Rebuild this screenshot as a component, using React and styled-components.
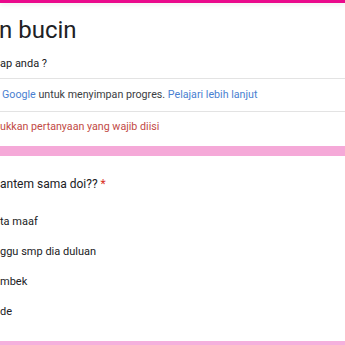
import React from "react"
import styled, { createGlobalStyle } from "styled-components"

const GlobalStyle = createGlobalStyle`
    html, body {
        margin: 0;
        padding: 0;
        background: #ffffff;
    }
    body {
        font-family: Roboto, "Noto Sans", "Liberation Sans", sans-serif;
        color: #202124;
    }
`

const options = ["ta maaf", "ggu smp dia duluan", "mbek", "de"]

function App() {
    return (
        <Page>
            <GlobalStyle />
            <TopBar />
            <HeaderCard>
                <Title>n bucin</Title>
                <Desc>ap anda ?</Desc>
                <Divider gap={6} />
                <InfoRow>
                    <Link>Google</Link> untuk menyimpan progres.{" "}
                    <Link>Pelajari lebih lanjut</Link>
                </InfoRow>
                <Divider />
                <Required>ukkan pertanyaan yang wajib diisi</Required>
            </HeaderCard>
            <QuestionCard>
                <Question>
                    antem sama doi?? <Star>*</Star>
                </Question>
                <OptionList>
                    {options.map((o) => (
                        <Option key={o}>{o}</Option>
                    ))}
                </OptionList>
            </QuestionCard>
            <NextCard />
        </Page>
    )
}

export default App

const Page = styled.div`
    width: 345px;
    height: 345px;
    overflow: hidden;
    display: flex;
    flex-direction: column;
    background: #ffffff;
`

const TopBar = styled.div`
    height: 3px;
    flex-shrink: 0;
    background: #ea0a8c;
    box-shadow: 0 2px 4px rgba(0, 0, 0, 0.08);
`

const HeaderCard = styled.div`
    display: flex;
    flex-direction: column;
    padding-top: 11px;
    flex-shrink: 0;
`

const Title = styled.div`
    font-size: 24px;
    line-height: 32px;
    height: 32px;
    color: #202124;
    margin-left: -1px;
`

const Desc = styled.div`
    font-size: 11px;
    line-height: 16px;
    margin-top: 10px;
    color: #202124;
`

const Divider = styled.div`
    height: 1px;
    flex-shrink: 0;
    background: #e3e3e3;
    margin-top: ${(p) => p.gap || 0}px;
`

const InfoRow = styled.div`
    font-size: 10.7px;
    line-height: 32px;
    height: 32px;
    color: #3c4043;
    padding-left: 2px;
    white-space: nowrap;
`

const Link = styled.span`
    color: #4a7fd1;
`

const Required = styled.div`
    font-size: 10.7px;
    line-height: 16px;
    padding: 7px 0 11px;
    color: #c24a45;
    white-space: nowrap;
`

const QuestionCard = styled.div`
    border-top: 10px solid #f5a9d8;
    padding-top: 19px;
    display: flex;
    flex-direction: column;
    background: #ffffff;
    flex-shrink: 0;
`

const Question = styled.div`
    font-size: 12px;
    line-height: 18px;
    color: #202124;
    white-space: nowrap;
`

const Star = styled.span`
    color: #d93025;
`

const OptionList = styled.div`
    display: flex;
    flex-direction: column;
    margin-top: 14px;
`

const Option = styled.div`
    height: 30px;
    line-height: 30px;
    font-size: 11px;
    color: #202124;
    white-space: nowrap;
`

const NextCard = styled.div`
    margin-top: 14px;
    border-top: 4px solid #f5b0dc;
    flex-shrink: 0;
`
